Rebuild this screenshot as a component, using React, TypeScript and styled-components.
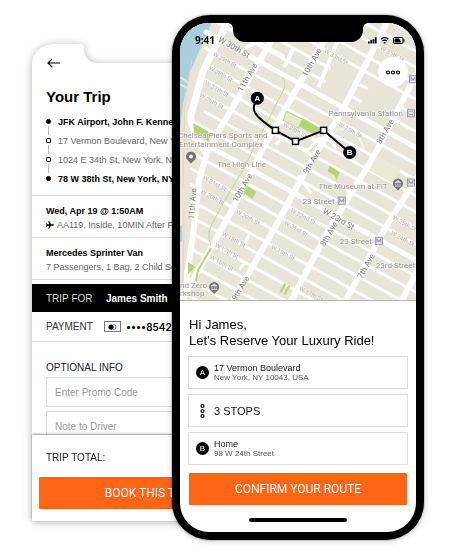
import React from "react";
import styled, { createGlobalStyle } from "styled-components";

const GlobalStyle = createGlobalStyle`
  * { box-sizing: border-box; }
  body { margin: 0; background: #fff; font-family: "Liberation Sans", Arial, sans-serif; }
  h1, h2, p, ul { margin: 0; padding: 0; }
  button, input { font: inherit; }
`;

/* ---------- page ---------- */

const Stage = styled.main`
  display: grid;
  grid-template-columns: 140fr 94fr 158fr;
  align-items: start;
  padding: 15px 32px;
`;

/* ---------- trip summary screen ---------- */

const TripScreen = styled.section`
  grid-column: 1 / 3;
  grid-row: 1;
  margin-top: 29px;
  filter: drop-shadow(0 1px 4px rgba(0, 0, 0, 0.3));
`;

const TripTab = styled.div`
  position: relative;
  width: 52px;
  height: 19px;
  background: #fff;
  border-radius: 22px 4px 0 0 / 19px 4px 0 0;

  &::after {
    content: "";
    position: absolute;
    left: 52px;
    bottom: 0;
    width: 12px;
    height: 12px;
    background: radial-gradient(circle at 100% 0, transparent 11px, #fff 12px);
  }
`;

const TripBody = styled.div`
  position: relative;
  background: #fff;
`;

const BackLink = styled.a`
  display: block;
  width: 14px;
  height: 10px;
  margin-left: 15px;
  transform: translateY(-5px);
  color: #000;

  svg { display: block; }
`;

const TripTitle = styled.h1`
  padding: 14px 14px 0;
  font-size: 15px;
  line-height: 20px;
  font-weight: 700;
`;

const Stops = styled.ul`
  list-style: none;
  padding: 5px 0 7px 14px;
  border-bottom: 1px solid #ddd;
`;

const Stop = styled.li<{ $end?: boolean }>`
  position: relative;
  display: flex;
  align-items: center;
  gap: 7px;
  height: 19px;
  font-size: 9px;
  white-space: nowrap;
  color: ${(p) => (p.$end ? "#000" : "#666")};
  font-weight: ${(p) => (p.$end ? 700 : 400)};

  &:not(:last-child)::after {
    content: "";
    position: absolute;
    left: 2px;
    top: 14px;
    width: 1px;
    height: 9px;
    background: #bbb;
  }
`;

const StopMark = styled.span<{ $end?: boolean }>`
  width: 5px;
  height: 5px;
  border: 1px solid #000;
  border-radius: ${(p) => (p.$end ? "50%" : "1px")};
  background: ${(p) => (p.$end ? "#000" : "#fff")};
`;

const Detail = styled.div`
  padding: 8px 0 5px 14px;
  border-bottom: 1px solid #ddd;
  font-size: 9px;
  line-height: 14px;
  white-space: nowrap;
`;

const DetailTitle = styled.h2`
  font-size: 9px;
  font-weight: 700;
`;

const DetailText = styled.p`
  display: flex;
  align-items: center;
  gap: 3px;
  color: #666;
`;

const InfoRow = styled.div<{ $dark?: boolean }>`
  display: flex;
  align-items: center;
  height: ${(p) => (p.$dark ? 28 : 30)}px;
  margin-top: ${(p) => (p.$dark ? 4 : 0)}px;
  padding: 0 14px;
  font-size: 10px;
  color: ${(p) => (p.$dark ? "#ddd" : "#333")};
  background: ${(p) => (p.$dark ? "#000" : "#fff")};
  border-bottom: ${(p) => (p.$dark ? "none" : "1px solid #ddd")};
`;

const Passenger = styled.strong`
  color: #fff;
`;

const CardNumber = styled.strong`
  color: #000;
  font-family: Inter, sans-serif;
  font-weight: 600;
`;

const InfoLabel = styled.span<{ $wide?: boolean }>`
  width: ${(p) => (p.$wide ? 60 : 58)}px;
`;

const CardBadge = styled.span`
  display: grid;
  place-items: center;
  width: 17px;
  height: 11px;
  margin-right: 5px;
  border: 1px solid #777;
`;

const Optional = styled.form`
  height: 93px;
  padding: 18px 0 0 14px;
  overflow: hidden;
`;

const OptionalTitle = styled.h2`
  margin-bottom: 2px;
  font-size: 10px;
  line-height: 15px;
  font-weight: 400;
  color: #222;
`;

const Field = styled.input`
  display: block;
  width: 100%;
  height: 30px;
  margin-bottom: 4px;
  padding: 0 8px;
  border: 1px solid #ddd;
  border-radius: 0;
  font-size: 10px;
  background: #fff;

  &::placeholder { color: #999; opacity: 1; }
`;

const TripFooter = styled.footer`
  position: relative;
  padding: 15px 7px 12px;
  background: #fff;
  box-shadow: 0 -1px 2px rgba(0, 0, 0, 0.4);
`;

const Total = styled.p`
  padding: 0 7px;
  margin-bottom: 11px;
  font-size: 10px;
  line-height: 16px;
  color: #222;
`;

const ActionButton = styled.button`
  display: block;
  width: 100%;
  height: 32px;
  padding: 0;
  border: 0;
  border-radius: 1px;
  background: #ff6516;
  color: #fff;
  font-family: Roboto, sans-serif;
  font-size: 12px;
  text-align: center;
  white-space: nowrap;
`;

/* ---------- route phone ---------- */

const Phone = styled.section`
  position: relative;
  z-index: 1;
  grid-column: 2 / 4;
  grid-row: 1;
  padding: 8px;
  border-radius: 38px;
  background: #000;
  box-shadow: 0 0 2px rgba(0, 0, 0, 0.5), 0 1px 7px rgba(0, 0, 0, 0.2);
`;

const Screen = styled.div`
  overflow: hidden;
  border-radius: 29px;
  background: #fff;
`;

const MapArea = styled.div`
  position: relative;
  height: 278px;
  border-bottom: 1px solid #b9b6aa;

  > svg { display: block; width: 100%; height: 100%; }
`;

const Notch = styled.div`
  position: absolute;
  top: 0;
  left: 50%;
  width: 130px;
  height: 19px;
  transform: translateX(-50%);
  border-radius: 0 0 12px 12px;
  background: #000;

  &::before, &::after {
    content: "";
    position: absolute;
    top: 0;
    width: 4px;
    height: 4px;
  }
  &::before { left: -4px; background: radial-gradient(circle at 0 100%, transparent 3px, #000 4px); }
  &::after { right: -4px; background: radial-gradient(circle at 100% 100%, transparent 3px, #000 4px); }
`;

const StatusBar = styled.div`
  position: absolute;
  top: 10px;
  left: 0;
  right: 0;
  display: flex;
  justify-content: space-between;
  align-items: center;
  height: 14px;
  padding: 0 11px 0 15px;
  font-family: "Noto Sans", sans-serif;
  font-size: 10px;
  font-weight: 700;
`;

const MenuButton = styled.button`
  position: absolute;
  top: 34px;
  right: 8px;
  display: grid;
  place-items: center;
  width: 30px;
  height: 30px;
  padding: 0;
  border: 0;
  border-radius: 50%;
  background: #fff;
`;

const Panel = styled.div`
  display: flex;
  flex-direction: column;
  padding: 16px 8px 10px;
`;

const Greeting = styled.h1`
  margin: 0 1px 7px;
  font-size: 13px;
  line-height: 16px;
  font-weight: 400;
  white-space: nowrap;
`;

const Places = styled.div`
  display: grid;
  gap: 5px;
  margin-bottom: 8px;
`;

const Place = styled.button`
  display: grid;
  grid-template-columns: 13px 1fr;
  align-items: center;
  gap: 5px;
  height: 33px;
  padding: 0 7px;
  border: 1px solid #ddd;
  background: #fff;
  color: #222;
  text-align: left;
  font-size: 9px;
  line-height: 10px;

  svg { justify-self: center; }
`;

const PlaceName = styled.span`
  display: block;
`;

const PlaceAddress = styled.span`
  display: block;
  font-size: 8px;
  color: #555;
`;

const StopsCount = styled.span`
  font-size: 11px;
  line-height: 16px;
  color: #111;
`;

const Letter = styled.span`
  display: grid;
  place-items: center;
  width: 13px;
  height: 13px;
  border-radius: 50%;
  background: #000;
  color: #fff;
  font-size: 8px;
`;

const ConfirmWrap = styled.div`
  padding: 0 1px;
`;

const HomeBar = styled.div`
  align-self: center;
  width: 98px;
  height: 4px;
  margin-top: 13px;
  border-radius: 2px;
  background: #000;
`;

/* ---------- map ---------- */

const streets = Array.from({ length: 26 }, (_, i) => i - 8);

const avenues = [
  "M276 33L222 126L207 153L199 180L193 235L187 275L184 302",
  "M334 23L297 88L262 150L232 210L197 273L182 300",
  "M388 20L338 118L310 162L275 227L232 302",
  "M420 66L373 157L328 230L290 302",
  "M420 172L385 227L344 302",
  "M420 264L400 302",
];

const parks = [
  "M193 124l15 8 1 10-15-8z",
  "M302 119l18 10-4 7-18-9z",
  "M246 186l10 6-4 7-9-6z",
  "M188 262l8 5-8 7z",
  "M329 166l10 7-3 8-2-5-7-4z",
  "M279 292l5-9 2 1-5 9zM283 294l5-9 2 1-5 9z",
];

type MapText = [string, number, number, number];

const streetNames: MapText[] = [
  ["W 29th St", 225, 60, 29], ["W 28th St", 221, 74, 29], ["W 27th St", 217, 89, 29],
  ["W 26th St", 212, 101, 29], ["W 33rd St", 336, 57, 29], ["W 35th St", 392, 54, 29],
  ["W 25th St", 350, 130, 29], ["W 28th St", 295, 130, 29], ["W 21st St", 215, 183, 29],
  ["W 20th St", 213, 197, 29], ["W 20th St", 248, 217, 29], ["W 18th St", 234, 239, 29],
  ["W 17th St", 227, 250, 29], ["W 16th St", 222, 262, 29], ["W 19th St", 283, 252, 29],
  ["W 21st St", 296, 228, 29], ["W 22nd St", 303, 216, 29], ["W 25th St", 404, 223, 29],
  ["W 24th St", 402, 238, 29], ["W 17th St", 311, 293, 29],
];

const avenueNames: MapText[] = [
  ["W 30th St", 234, 48, 30], ["W 23rd St", 338, 219, 30],
  ["11th Ave", 247, 78, -60], ["10th Ave", 311, 63, -60], ["8th Ave", 384, 132, -60],
  ["11th Ave", 192, 204, -85], ["10th Ave", 242, 188, -60], ["9th Ave", 311, 162, -60],
  ["8th Ave", 328, 234, -60], ["9th Ave", 240, 288, -60], ["7th Ave", 365, 266, -60],
];

const poiNames: [string, number, number][] = [
  ["Chelsea Piers Sports and", 178, 139], ["Entertainment Complex", 179, 148],
  ["The High Line", 217, 167], ["Pennsylvania Station", 328, 117],
  ["The Museum at FIT", 318, 189], ["23 Street", 302, 204], ["23 Street", 339, 244],
  ["23rd Street", 375, 268], ["nd Zero", 180, 288], ["rkshop", 180, 296],
];

const MapLabel = styled.text<{ $size: number; $tone: string }>`
  font-family: Roboto, sans-serif;
  font-size: ${(p) => p.$size}px;
  fill: ${(p) => p.$tone};
  paint-order: stroke;
  stroke: #f6f4ee;
  stroke-width: 1px;
`;

const RouteLetter = styled.text`
  font-family: "Liberation Sans", sans-serif;
  font-size: 8px;
  font-weight: 700;
  fill: #fff;
  text-anchor: middle;
`;

const rotated = (list: MapText[], size: number, tone: string) =>
  list.map(([label, x, y, angle], i) => (
    <MapLabel key={i} $size={size} $tone={tone} textAnchor="middle" dy="3" transform={`translate(${x} ${y}) rotate(${angle})`}>
      {label}
    </MapLabel>
  ));

function CityMap() {
  return (
    <svg viewBox="180 23 235 278" preserveAspectRatio="xMidYMid slice" role="img" aria-label="Route map">
      <rect x="100" y="0" width="400" height="340" fill="#e8e4d8" />
      <path d="M100 0H222L212 23L201 48L190 73L183 105L180 130H100z" fill="#a9cfdc" />
      <path d="M180 78l9 6M180 85l7 4" stroke="#e8e4d8" strokeWidth="2" />
      <path d="M180 226h2v16h-2z" fill="#a9cfdc" />
      <g stroke="#fff" fill="none">
        {streets.map((k) => {
          const left = k < 6 ? 204 : 190;
          const y = 30 + 16 * k + (left - 200) * 0.55;
          return <path key={k} d={`M${left} ${y}L420 ${151 + 16 * k}`} strokeWidth={k === 0 || k === 7 ? 5 : 3} />;
        })}
        <path d="M333 61L363 78L347 106L322 92zM370 84L399 100L384 127L357 112z" fill="#e8e4d8" stroke="none" />
        {avenues.map((d) => <path key={d} d={d} strokeWidth="6" />)}
        <path d="M230 18L203 72L191 115Q189 128 207 154" strokeWidth="7" />
        <path d="M340 34L318 88M245 49l12-6 27 15M284 68l9-19" strokeWidth="4" />
        <path d="M275 145q12-12 22 0t18-4q12-6 21 8M239 270l5-7-5-4M245 243l4-9M297 176l14 18" strokeWidth="3" />
      </g>
      <path d="M192 60L185 100L183 190M184 210l-1 80" stroke="#e2d5c5" strokeWidth="1" fill="none" />
      <path d="M331 130h18q10 4 14 20" fill="none" stroke="#f7f5ee" strokeWidth="2" />
      <path d="M376 157l24 13-8 14-24-13z" fill="#ece9d9" />
      <path d="M286 112l16 8-4 9-15-8z" fill="#e8e8cf" stroke="#bad982" />
      {parks.map((d) => <path key={d} d={d} fill="#b5d477" />)}
      <path d="M282 78q4 5 2 11L262 132L240 175L222 205L210 228Q207 236 211 246" fill="none" stroke="#c3dc96" strokeWidth="1" />
      <path d="M211 248L198 270L196 281" fill="none" stroke="#b5d477" strokeWidth="2" />

      {rotated(streetNames, 6, "#b5b2b2")}
      {rotated(avenueNames, 8, "#858385")}
      {poiNames.map(([label, x, y], i) => (
        <MapLabel key={i} $size={8} $tone={i < 3 || i === 4 || i > 7 ? "#a39497" : "#96959c"} x={x} y={y}>{label}</MapLabel>
      ))}

      {[[191, 157], [397, 184], [214, 287]].map(([x, y], i) => (
        <g key={x} transform={`translate(${x} ${y})`}>
          <path d="M0 7L-3 4A5 5 0 1 1 3 4z" fill="#77716f" />
          {i === 0 ? <circle r="2" fill="#fff" /> : <path d="M-3-1L0-3 3-1zM-2 0v2M0 0v2M2 0v2M-3 2.500h6" fill="#ddd" stroke="#ddd" strokeWidth=".8" />}
        </g>
      ))}
      {[[410, 183], [341, 201], [378, 241], [412, 80]].map(([x, y]) => (
        <g key={x} transform={`translate(${x} ${y})`} fill="#eeedf0" stroke="#9b9aa5">
          <rect x="-3.500" y="-3.500" width="7" height="7" />
          <path d="M-2 2v-4l2 3 2-3v4" fill="none" />
        </g>
      ))}
      <g transform="translate(410 114)" fill="#eeedf0" stroke="#9b9aa5">
        <rect x="-3.500" y="-3.500" width="7" height="7" />
        <path d="M-2-2h4v3h-4zM-2 3l1-2M2 3l-1-2" strokeWidth=".8" />
      </g>

      <path d="M255 103C251 111 253 116 275 131L295 142L323 131L349 153" fill="none" stroke="#000" strokeWidth="2" />
      {[[275, 131], [295, 142], [323, 131]].map(([x, y]) => (
        <rect key={x} x={x - 3} y={y - 3} width="6" height="6" fill="#fff" stroke="#000" strokeWidth="1.500" />
      ))}
      {([["A", 257, 99], ["B", 349, 153]] as [string, number, number][]).map(([letter, x, y]) => (
        <g key={letter}>
          <circle cx={x} cy={y} r="6.500" />
          <RouteLetter x={x} y={y + 3}>{letter}</RouteLetter>
        </g>
      ))}
    </svg>
  );
}

const StatusIcons = () => (
  <svg width="37" height="10" viewBox="0 0 37 10" aria-hidden="true">
    <path d="M0 6.500h1.700v2H0zM2.300 5.300h1.700v3.200H2.300zM4.600 4h1.700v4.500H4.600zM6.900 2.300h1.700v6.200H6.900z" />
    <path d="M13 4.200q3.700-3 7.400 0M14.500 6q2.200-1.800 4.400 0" fill="none" stroke="#000" strokeWidth="1.300" />
    <circle cx="16.700" cy="7.700" r="1" />
    <rect x="25.500" y="2.500" width="9.500" height="6" rx="1" fill="none" stroke="#000" />
    <path d="M26.500 3.500h4.500l2.500 4H26.500zM35.500 4.200h1v2.600h-1z" />
  </svg>
);

const Rings = ({ vertical }: { vertical?: boolean }) => (
  <svg width={vertical ? 5 : 16} height={vertical ? 16 : 5} viewBox={vertical ? "0 0 5 16" : "0 0 16 5"} aria-hidden="true">
    {[3, 8, 13].map((p) => (
      <circle key={p} cx={vertical ? 2.5 : p} cy={vertical ? p : 2.5} r="1.500" fill="#fff" stroke="#000" strokeWidth="1.200" />
    ))}
  </svg>
);

const stops = [
  { text: "JFK Airport, John F. Kennedy", end: true },
  { text: "17 Vermon Boulevard, New York" },
  { text: "1024 E 34th St, New York, NY" },
  { text: "78 W 38th St, New York, NY", end: true },
];

export default function App() {
  return (
    <>
      <GlobalStyle />
      <Stage>
        <TripScreen>
          <TripTab />
          <TripBody>
            <BackLink href="#" aria-label="Back">
              <svg width="14" height="10" viewBox="0 0 14 10" fill="none" stroke="currentColor" strokeWidth="1.200">
                <path d="M13 5H1M5 1L1 5l4 4" />
              </svg>
            </BackLink>
            <TripTitle>Your Trip</TripTitle>
            <Stops>
              {stops.map((s) => (
                <Stop key={s.text} $end={s.end}><StopMark $end={s.end} />{s.text}</Stop>
              ))}
            </Stops>
            <Detail>
              <DetailTitle>Wed, Apr 19 @ 1:50AM</DetailTitle>
              <DetailText>
                <svg width="8" height="8" viewBox="0 0 8 8" aria-hidden="true">
                  <path d="M8 4q0-.7-1.200-.7H5L3 0H2.200l1 3.300H1.400L.6 2.200H0L.5 4 0 5.800h.6l.8-1.100h1.800l-1 3.300H3l2-3.300h1.800Q8 4.700 8 4z" />
                </svg>
                AA119, Inside, 10MIN After Flight
              </DetailText>
            </Detail>
            <Detail>
              <DetailTitle>Mercedes Sprinter Van</DetailTitle>
              <DetailText>7 Passengers, 1 Bag, 2 Child Seats</DetailText>
            </Detail>
            <InfoRow $dark>
              <InfoLabel $wide>TRIP FOR</InfoLabel>
              <Passenger>James Smith</Passenger>
            </InfoRow>
            <InfoRow>
              <InfoLabel>PAYMENT</InfoLabel>
              <CardBadge>
                <svg width="9" height="6" viewBox="0 0 9 6" aria-hidden="true">
                  <circle cx="5.800" cy="3" r="2.300" fill="#fff" stroke="#333" strokeWidth=".7" />
                  <circle cx="3" cy="3" r="2.600" />
                </svg>
              </CardBadge>
              <CardNumber>••••8542</CardNumber>
            </InfoRow>
            <Optional>
              <OptionalTitle>OPTIONAL INFO</OptionalTitle>
              <Field aria-label="Promo code" placeholder="Enter Promo Code" />
              <Field aria-label="Note to driver" placeholder="Note to Driver" />
            </Optional>
            <TripFooter>
              <Total>TRIP TOTAL:</Total>
              <ActionButton type="button">BOOK THIS TRIP</ActionButton>
            </TripFooter>
          </TripBody>
        </TripScreen>

        <Phone>
          <Screen>
            <MapArea>
              <CityMap />
              <StatusBar><span>9:41</span><StatusIcons /></StatusBar>
              <Notch />
              <MenuButton type="button" aria-label="More options"><Rings /></MenuButton>
            </MapArea>
            <Panel>
              <Greeting>Hi James,<br />Let’s Reserve Your Luxury Ride!</Greeting>
              <Places>
                <Place type="button">
                  <Letter>A</Letter>
                  <span>
                    <PlaceName>17 Vermon Boulevard</PlaceName>
                    <PlaceAddress>New York, NY 10043, USA</PlaceAddress>
                  </span>
                </Place>
                <Place type="button">
                  <Rings vertical />
                  <StopsCount>3 STOPS</StopsCount>
                </Place>
                <Place type="button">
                  <Letter>B</Letter>
                  <span>
                    <PlaceName>Home</PlaceName>
                    <PlaceAddress>98 W 24th Street</PlaceAddress>
                  </span>
                </Place>
              </Places>
              <ConfirmWrap>
                <ActionButton type="button">CONFIRM YOUR ROUTE</ActionButton>
              </ConfirmWrap>
              <HomeBar />
            </Panel>
          </Screen>
        </Phone>
      </Stage>
    </>
  );
}
